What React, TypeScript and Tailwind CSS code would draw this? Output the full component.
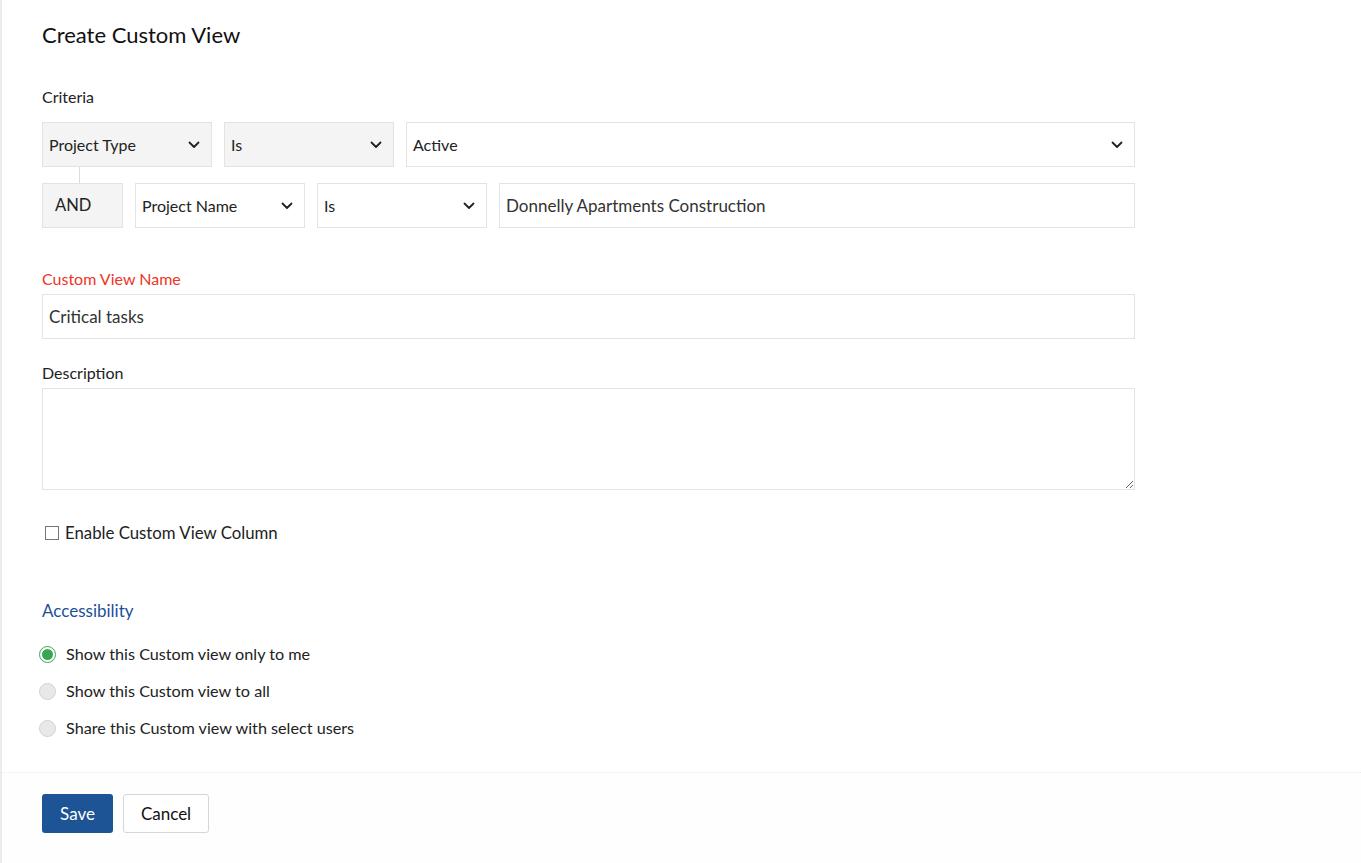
import React from 'react';

const Chevron = () => (
  <svg width="12" height="8" viewBox="0 0 12 8" fill="none" className="shrink-0">
    <path d="M1.5 1.5 6 6l4.5-4.5" stroke="#222" strokeWidth="1.8" strokeLinecap="round" strokeLinejoin="round" />
  </svg>
);

interface SelectBoxProps {
  label: string;
  gray?: boolean;
  className?: string;
}

const SelectBox = ({ label, gray, className }: SelectBoxProps) => (
  <div
    className={`h-[45px] flex items-center justify-between pl-[6px] pr-[11px] border border-[#e3e3e3] ${
      gray ? 'bg-[#f4f4f4]' : 'bg-white'
    } ${className ?? ''}`}
  >
    <span className="text-[16px] text-[#222]">{label}</span>
    <Chevron />
  </div>
);

const Radio = ({ checked, label }: { checked?: boolean; label: string }) => (
  <label className="flex items-center h-[37px]">
    {checked ? (
      <span className="w-[17px] h-[17px] rounded-full border-[1.5px] border-[#3aa655] bg-white flex items-center justify-center">
        <span className="w-[11px] h-[11px] rounded-full bg-[#3aa655]" />
      </span>
    ) : (
      <span className="w-[17px] h-[17px] rounded-full border border-[#d2d2d2] bg-[#e8e8e8]" />
    )}
    <span className="ml-[10px] text-[16.2px] text-[#222]">{label}</span>
  </label>
);

export default function App() {
  return (
    <div
      className="min-h-[863px] bg-white border-l-2 border-[#ececec] flex flex-col"
      style={{ fontFamily: 'Lato, "Noto Sans", sans-serif' }}
    >
      <div className="pl-[40px] pt-[20px] flex-1">
        <h1 className="text-[22px] text-[#111] leading-[30px]">Create Custom View</h1>

        <div className="mt-[37px] text-[16px] text-[#222] leading-[20px]">Criteria</div>

        <div className="mt-[15px] w-[1093px]">
          <div className="flex gap-[12px]">
            <SelectBox label="Project Type" gray className="w-[170px]" />
            <SelectBox label="Is" gray className="w-[170px]" />
            <SelectBox label="Active" className="flex-1" />
          </div>
          <div className="ml-[37px] w-px h-[16px] bg-[#dcdcdc]" />
          <div className="flex gap-[12px]">
            <div className="w-[81px] h-[45px] flex items-center pl-[12px] bg-[#f4f4f4] border border-[#e3e3e3] text-[16.5px] text-[#222]">
              AND
            </div>
            <SelectBox label="Project Name" className="w-[170px]" />
            <SelectBox label="Is" className="w-[170px]" />
            <div className="flex-1 h-[45px] flex items-center pl-[6px] border border-[#e3e3e3] text-[17px] text-[#333]">
              Donnelly Apartments Construction
            </div>
          </div>
        </div>

        <div className="mt-[41px] text-[16px] text-[#f0341f] leading-[20px]">Custom View Name</div>
        <div className="mt-[5px] w-[1093px] h-[45px] flex items-center pl-[6px] border border-[#e3e3e3] text-[17px] text-[#333]">
          Critical tasks
        </div>

        <div className="mt-[24px] text-[16px] text-[#222] leading-[20px]">Description</div>
        <textarea className="mt-[5px] block w-[1093px] h-[102px] border border-[#e3e3e3] outline-none resize-y" />

        <label className="mt-[31px] flex items-center h-[24px]">
          <span className="ml-[3px] w-[14px] h-[14px] border border-[#777] bg-white" />
          <span className="ml-[6px] text-[16.8px] text-[#222]">Enable Custom View Column</span>
        </label>

        <div className="mt-[55px] text-[17px] text-[#1c4f98] leading-[22px]">Accessibility</div>

        <div className="mt-[14px] flex flex-col -ml-[3px]">
          <Radio checked label="Show this Custom view only to me" />
          <Radio label="Show this Custom view to all" />
          <Radio label="Share this Custom view with select users" />
        </div>
      </div>

      <div className="border-t border-dotted border-[#ececec] bg-[#fefefe] h-[91px] pl-[40px] pt-[21px] flex items-start gap-[10px]">
        <button className="w-[71px] h-[39px] rounded-[3px] bg-[#1d5496] text-white text-[17px]">Save</button>
        <button className="w-[86px] h-[39px] rounded-[3px] bg-white border border-[#d6d6d6] text-[#111] text-[17px]">
          Cancel
        </button>
      </div>
    </div>
  );
}
